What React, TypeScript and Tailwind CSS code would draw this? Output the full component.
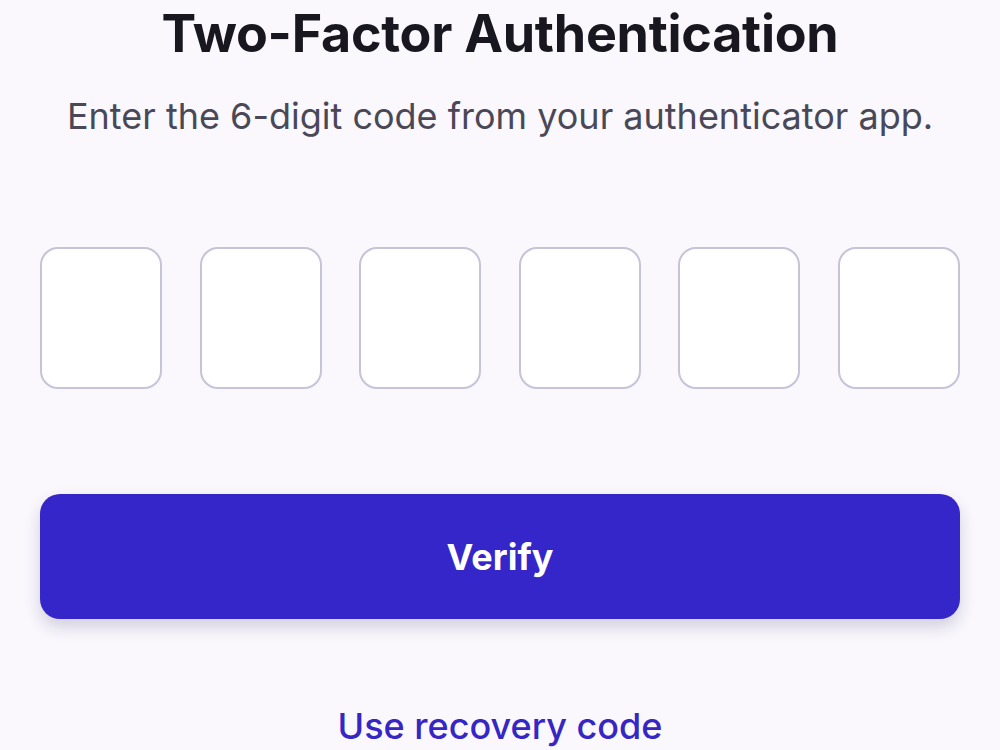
import React from "react";

export default function App() {
  const boxes = [0, 1, 2, 3, 4, 5];
  return (
    <div className="min-h-[750px] w-full bg-[#faf8fd] font-['Inter',sans-serif] overflow-hidden">
      <div className="mx-auto w-[920px] pt-[2px] flex flex-col items-center">
        <h1 className="text-[52px] leading-[64px] font-bold text-[#18171f] tracking-[-0.005em]">
          Two-Factor Authentication
        </h1>
        <p className="mt-[28px] text-[36px] leading-[44px] text-[#4a4857]">
          Enter the 6-digit code from your authenticator app.
        </p>
        <div className="mt-[109px] w-full flex justify-between">
          {boxes.map((b) => (
            <input
              key={b}
              type="text"
              maxLength={1}
              className="w-[122px] h-[142px] rounded-[18px] border-2 border-[#c7c3d8] bg-white outline-none"
            />
          ))}
        </div>
        <button className="mt-[105px] w-full h-[125px] rounded-[20px] bg-[#3526c9] text-white text-[36px] leading-[44px] font-bold shadow-[0_8px_16px_rgba(30,20,80,0.18)]">
          Verify
        </button>
        <a className="mt-[85px] text-[36px] leading-[44px] font-medium text-[#3626c4]">Use recovery code</a>
      </div>
    </div>
  );
}
